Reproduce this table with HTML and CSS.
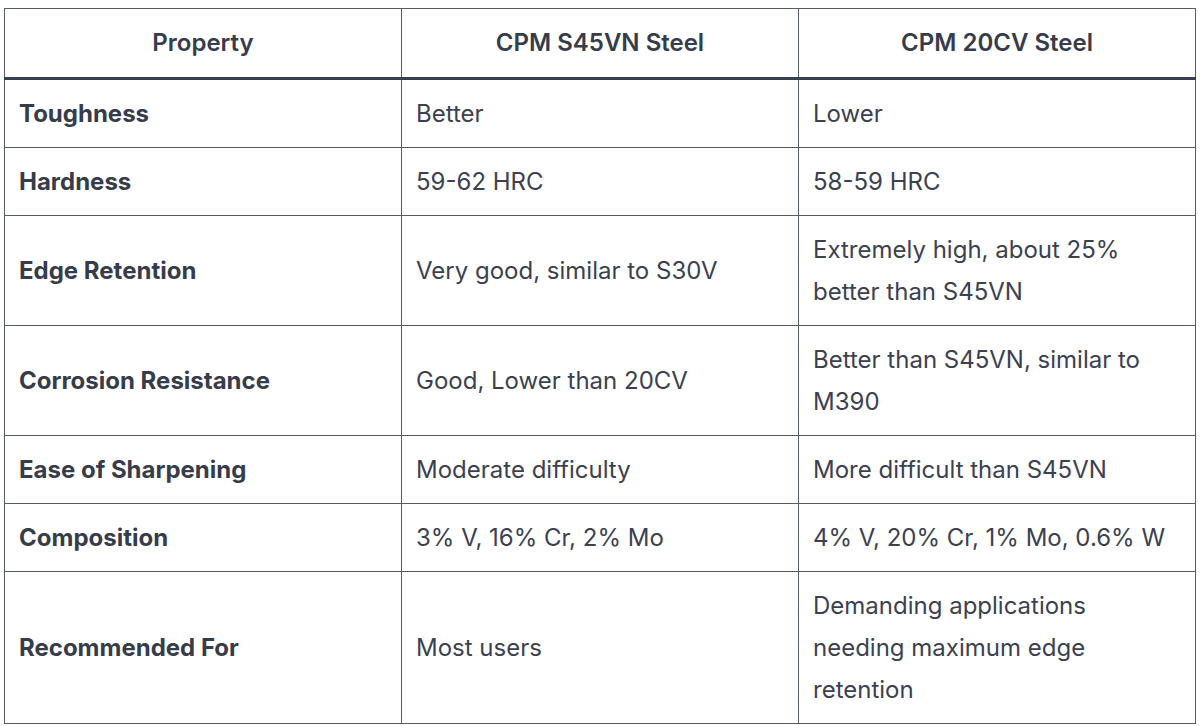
FILE: index.html
```html
<!DOCTYPE html>
<html lang="en">
<head>
<meta charset="utf-8">
<title>CPM S45VN vs CPM 20CV</title>
<link rel="stylesheet" href="styles.css">
</head>
<body>
<table class="cmp">
  <thead>
    <tr>
      <th>Property</th>
      <th>CPM S45VN Steel</th>
      <th>CPM 20CV Steel</th>
    </tr>
  </thead>
  <tbody>
    <tr><td class="prop">Toughness</td><td>Better</td><td>Lower</td></tr>
    <tr><td class="prop">Hardness</td><td>59-62 HRC</td><td>58-59 HRC</td></tr>
    <tr><td class="prop">Edge Retention</td><td>Very good, similar to S30V</td><td>Extremely high, about 25% better than S45VN</td></tr>
    <tr><td class="prop">Corrosion Resistance</td><td>Good, Lower than 20CV</td><td>Better than S45VN, similar to M390</td></tr>
    <tr><td class="prop">Ease of Sharpening</td><td>Moderate difficulty</td><td>More difficult than S45VN</td></tr>
    <tr><td class="prop">Composition</td><td>3% V, 16% Cr, 2% Mo</td><td>4% V, 20% Cr, 1% Mo, 0.6% W</td></tr>
    <tr><td class="prop">Recommended For</td><td>Most users</td><td>Demanding applications needing maximum edge retention</td></tr>
  </tbody>
</table>
</body>
</html>
```

FILE: styles.css
```css
html, body {
  margin: 0;
  padding: 0;
  background: #ffffff;
}

body {
  padding: 8px 4px;
  font-family: Inter, "Noto Sans", "Liberation Sans", sans-serif;
  color: #3b4150;
}

.cmp {
  width: 1192px;
  border-collapse: collapse;
  table-layout: fixed;
  font-size: 24px;
  line-height: 42px;
}

.cmp th,
.cmp td {
  border: 1px solid #545a66;
  padding: 13px 14px 12px 14px;
  vertical-align: middle;
  text-align: left;
}

.cmp th {
  text-align: center;
  font-weight: 600;
  color: #363c4a;
  padding: 13px 14px 13px 14px;
  border-bottom: 3px solid #394050;
}

.cmp td.prop {
  font-weight: 700;
  color: #363c4a;
}
```
